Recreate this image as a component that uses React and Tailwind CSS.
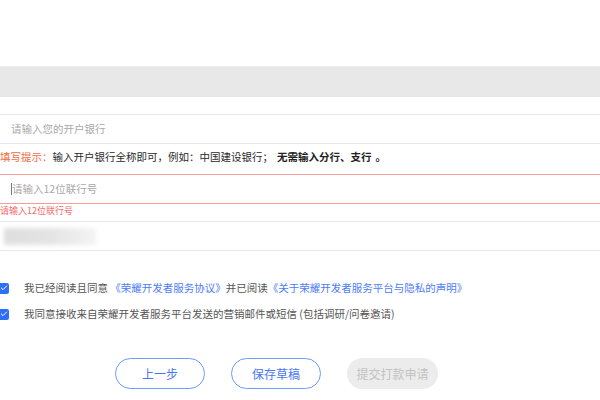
import { Check } from 'lucide-react'

function CheckRow({ children }) {
  return (
    <div className="flex items-center h-[20px]">
      <span className="ml-[-2px] w-[11px] h-[11px] rounded-[2px] bg-[#2d6ff6] flex items-center justify-center shrink-0">
        <Check className="w-[8px] h-[8px] text-white" strokeWidth={3} />
      </span>
      <span className="ml-[15px] text-[10.5px] text-[#555] whitespace-nowrap">{children}</span>
    </div>
  )
}

export default function App() {
  return (
    <div className="w-[600px] h-[400px] bg-white overflow-hidden font-['Noto_Sans_CJK_SC','Noto_Sans',sans-serif]">
      <div className="h-[66px]" />
      <div className="h-[31px] bg-[#e8e8e8] border-t border-[#ededf0]" />
      <div className="h-[17px]" />

      {/* 开户银行 */}
      <div className="h-[30px] border-y border-[#e6e6ec] flex items-center pl-[11px]">
        <span className="text-[10.5px] text-[#a9a9a9]">请输入您的开户银行</span>
      </div>

      <div className="h-[30px] flex items-center pb-[4px] text-[10.5px] whitespace-nowrap">
        <span className="text-[#f2683e]">填写提示：</span>
        <span className="text-[#2a2a2a]">输入开户银行全称即可，例如：中国建设银行；</span>
        <span className="text-[#222] font-bold ml-[4px]">无需输入分行、支行</span>
        <span className="text-[#222] font-bold ml-[4px]">。</span>
      </div>

      {/* 联行号 */}
      <div className="h-[30px] border-y border-[#fb9d9d] flex items-center pl-[11px]">
        <span className="w-px h-[12px] bg-[#777]" />
        <span className="text-[10.5px] text-[#a9a9a9]">请输入12位联行号</span>
      </div>
      <div className="h-[17px] leading-[14px] text-[9px] text-[#f26b6b]">请输入12位联行号</div>

      <div className="h-[30px] border-y border-[#e6e6ec] flex items-center pl-[4px]">
        <div className="w-[92px] h-[17px] bg-gradient-to-r from-[#dedede] via-[#e4e4e4] to-[#f4f4f4] blur-[2px]" />
      </div>

      <div className="mt-[27px] flex flex-col gap-[6px]">
        <CheckRow>
          我已经阅读且同意 <span className="text-[#4d7cf6]">《荣耀开发者服务协议》</span>并已阅读<span className="text-[#4d7cf6]">《关于荣耀开发者服务平台与隐私的声明》</span>
        </CheckRow>
        <CheckRow>我同意接收来自荣耀开发者服务平台发送的营销邮件或短信 (包括调研/问卷邀请)</CheckRow>
      </div>

      <div className="mt-[34px] pl-[115px] flex gap-[26px] text-[12px]">
        <button className="w-[90px] h-[31px] rounded-full border border-[#6e9cfb] text-[#4a76f3]">上一步</button>
        <button className="w-[90px] h-[31px] rounded-full border border-[#6e9cfb] text-[#4a76f3]">保存草稿</button>
        <button className="w-[91px] h-[31px] rounded-full bg-[#ececec] text-[#c2c2c2]">提交打款申请</button>
      </div>
    </div>
  )
}
